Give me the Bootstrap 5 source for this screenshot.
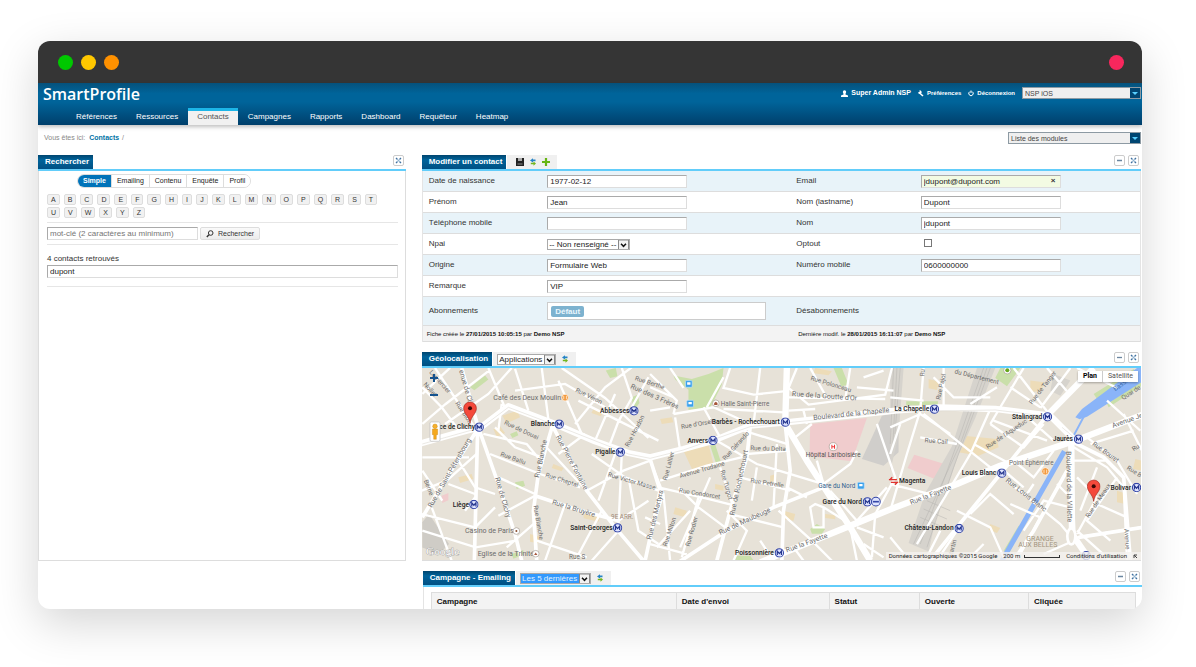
<!DOCTYPE html>
<html lang="fr">
<head>
<meta charset="utf-8">
<meta name="viewport" content="width=device-width, initial-scale=1">
<title>SmartProfile - Contacts</title>
<link href="https://cdn.jsdelivr.net/npm/bootstrap@5.3.0/dist/css/bootstrap.min.css" rel="stylesheet">
<style>
body{font-family:"Liberation Sans",Arial,sans-serif;font-size:8px;line-height:12px;color:#333;background:#fff;overflow-x:hidden}
input,select,button{font:inherit;color:inherit}
a{text-decoration:none}
.stage{padding:41px 54px 57px 38px}
.window{border-radius:12px;overflow:hidden;background:#fff;box-shadow:0 14px 45px rgba(0,0,0,.17)}
.titlebar{height:42px;background:#353535;padding:0 18px 0 20px}
.dot{width:15px;height:15px;border-radius:50%}
.masthead{height:42px;background:linear-gradient(#05517b,#00649a 25%,#00649a 45%,#003f6b);box-shadow:0 2px 4px rgba(0,0,0,.25);position:relative}
.brand{font:600 16px/22px "Open Sans",sans-serif;color:#fff;padding-left:5px}
.user-links{font-size:6px;font-weight:700;gap:7px;padding:4px 1px 0 0}
.user-links a{color:#fff;gap:3px}
.user-links .who{font-size:7px}
.main-nav{padding-left:29px;height:17px;gap:1px}
.main-nav .nav-link{color:#fff;padding:0 9px;line-height:11px;border-top:3px solid transparent;height:17px;font-size:8px}
.main-nav .active{background:#f1f1f1;color:#555;border-top-color:#1cb5e8}
.module-pick{appearance:none;border:1px solid #8d9aa3;border-radius:0;background:#efefef url("data:image/svg+xml,%3Csvg xmlns='http://www.w3.org/2000/svg' width='10' height='12'%3E%3Cpath fill='%23004672' d='M0 0h10v12H0z'/%3E%3Cpath fill='%2358d0ff' d='M2 5h6L5 8z'/%3E%3C/svg%3E") right center no-repeat;font-size:7px;font-weight:400;line-height:9px;height:12px;padding:0 12px 0 2px;color:#444}
.crumbs{height:30px;font-size:7px;padding:7px 0 0 6px;color:#888}
.crumbs .module-pick{margin-right:1px}
.crumbs a{color:#0072a5;font-weight:700;font-size:7px;margin:0 1px 0 2px}
.panes{gap:16px;padding-right:1px}
.panel-head{border-bottom:2px solid #62cdfa;height:16px}
.panel-head h2{font-size:8px;line-height:14px;font-weight:700;color:#fff;margin:0 1px 0 0;padding:0 4px 0 7px;height:14px;background:linear-gradient(#00456f,#00639a 35%,#005083)}
.panel-gap{margin-top:10px}
.tools{background:#f0f0f0;height:14px;gap:5px;padding:0 7px 0 9px}
.tools-pick{padding-left:4px}
.tools button,.mini{border:0;background:none;padding:0;line-height:0}
.mini{width:11px;height:11px;border:1px solid #ccc;border-radius:2px;background:#fff;margin-left:3px}
.mini-last{margin-right:2px}
.panel-body{border:1px solid #ddd;border-top:0;padding:3px 7px 0 8px;min-height:390px}
.modes{margin:0 0 6px 30px;width:max-content;border:1px solid #ddd;border-radius:8px;overflow:hidden;height:14px}
.modes button{border:0;border-right:1px solid #ddd;background:#fff;font-size:7px;line-height:12px;padding:0 5px;color:#222}
.modes button:last-child{border-right:0}
.modes .on{background:#0073b9;color:#fff;font-weight:700}
.letters{gap:2px 4px;padding-right:14px}
.letters button{border:1px solid #ddd;border-radius:2px;background:#f1f1f1;font-size:7px;line-height:9px;padding:0 3px;min-width:12px;color:#333}
.letters .thin{min-width:10px}
.rule{border-top:1px solid #e6e6e6}
.field{border:1px solid #ddd;border-top-color:#aaa;border-left-color:#aaa;background:#fff;height:13px;line-height:11px;padding:0 2px;color:#222;display:block;border-radius:0}
.search-row{padding:4px 0;margin-top:4px}
.search-btn{border:1px solid #ddd;border-radius:2px;background:linear-gradient(#fafafa,#ececec);font-size:7px;line-height:11px;padding:0 5px;gap:4px;margin-left:2px}
.native{appearance:none;border:1px solid #aaa;border-radius:0;height:11px;line-height:9px;padding:0 12px 0 1px;color:#222;background:#fff url("data:image/svg+xml,%3Csvg xmlns='http://www.w3.org/2000/svg' width='11' height='10'%3E%3Cpath fill='%23f2f2f2' stroke='%23888' d='M.5.5h10v9H.5z'/%3E%3Cpath fill='none' stroke='%23111' stroke-width='1.5' d='M3 4l2.500 2.500L8 4'/%3E%3C/svg%3E") right center no-repeat}
.native.picked{color:#e4f4ff;background-color:#3299fe}
.form-line{display:grid;grid-template-columns:25fr 50fr 25fr 44fr;align-items:center;min-height:21px;border-bottom:1px solid #ddd}
.form-line:nth-child(odd){background:#e8f3f9}
.form-line>:first-child{padding-left:6px}
.form-line .field{width:140px}
.tick{appearance:none;width:8px;height:8px;border:1px solid #777;background:#fff;margin:0 0 2px 3px}
.tick:checked{background:#3299fe}
.contact-form{border-left:1px solid #e4e4e4;border-right:1px solid #e4e4e4}
.mail-x{left:130px}
.tagbox{border:1px solid #ccc;background:#fff;width:219px;height:18px;padding:0 3px}
.tagbox span{background:#7db2cf;color:#e9f6fd;font-weight:700;border-radius:2px;line-height:11px;padding:0 4px}
.form-foot{display:grid;grid-template-columns:75fr 69fr;background:#f3f3f3;border-bottom:1px solid #ddd;font-size:6px;height:16px;line-height:16px;padding-left:4px;color:#111}
.map{position:relative;height:193px;overflow:hidden;border-bottom:1px solid #ddd;background:#e7e2d8}
.map>svg{width:100%;height:192px;display:block}
.map text{font-family:Roboto,sans-serif;font-size:19px;fill:#6b6b6b}
.map .wide{font-size:21px}
.map .stop text{fill:#222;font-size:20px;font-weight:500;text-anchor:end}
.map-type{position:absolute;right:3px;top:3px;box-shadow:0 1px 2px rgba(0,0,0,.3)}
.map-type button{border:0;background:#fff;font:7px/11px Roboto,sans-serif;padding:0 5px;color:#555}
.map-type .on{font-weight:700;color:#000;border-right:1px solid #ccc}
.map-zoom{position:absolute;left:7px;top:5px;gap:8px}
.map-zoom button{border:0;background:none;padding:0;line-height:0}
.map-legal{position:absolute;right:0;bottom:0;background:rgba(245,243,240,.8);font:6px/8px Roboto,sans-serif;color:#222;gap:6px;padding:0 3px}
.map-legal a{color:#222}
.scalebar{width:36px;height:3px;border:1px solid #333;border-top:0}
.campaign-head{margin:10px -1px 0 1px}
.campaigns{margin-left:1px;border-left:1px solid #e4e4e4;padding:5px 5px 0 7px}
.campaigns table{table-layout:fixed;width:100%;border:1px solid #ddd;border-bottom:0;border-collapse:collapse}
.campaigns th{background:#f3f3f3;border-right:1px solid #ddd;padding:3px 5px 1px;color:#111;line-height:12px}
</style>
</head>
<body>
<svg width="0" height="0" class="position-absolute" aria-hidden="true">
  <symbol id="i-close" viewBox="0 0 9 9"><path d="M2 2l1.500 1.500M7 2L5.500 3.500M2 7l1.500-1.500M7 7L5.500 5.500" stroke="#3f71a0" stroke-width="1.300"/><circle cx="4.500" cy="4.500" r="1" fill="#8fb3d0"/></symbol>
  <symbol id="i-min" viewBox="0 0 9 9"><path d="M2 4.500h5" stroke="#6b86a0" stroke-width="1.300"/></symbol>
  <symbol id="i-sync" viewBox="0 0 8 8"><path d="M1 2.500L4 .3v1.200h2.500v1.700H4v1.300z" fill="#2584c6"/><path d="M7 5.600L4.500 3.500v1.200H1.800v1.600h2.700v1.400z" fill="#73b51e"/></symbol>
  <symbol id="i-metro" viewBox="0 0 28 28"><circle cx="14" cy="14" r="12" fill="#dfe4ff" stroke="#3446a8" stroke-width="3"/><path d="M8 20V9l6 7 6-7v11" fill="none" stroke="#26378f" stroke-width="3.500"/></symbol>
  <symbol id="i-pin" viewBox="0 0 42 68"><path d="M21 66C19 45 2 38 2 21a19 19 0 0 1 38 0c0 17-17 24-19 45z" fill="#f4493b" stroke="#a5281e" stroke-width="2"/><circle cx="21" cy="21" r="6" fill="#3b0805"/></symbol>
</svg>

<div class="stage">
<div class="window">
  <div class="titlebar d-flex align-items-center">
    <span class="dot" style="background:#00c800"></span>
    <span class="dot ms-2" style="background:#ffc800"></span>
    <span class="dot ms-2" style="background:#ff9100"></span>
    <span class="dot ms-auto" style="background:#f8275d"></span>
  </div>

  <header class="masthead d-flex flex-column justify-content-between">
    <div class="d-flex justify-content-between">
      <div class="brand">SmartProfile</div>
      <div class="user-links d-flex align-items-start">
        <a href="#" class="who d-flex align-items-center"><svg width="7" height="7" viewBox="0 0 7 7"><circle cx="3.500" cy="2" r="1.700" fill="#fff"/><path d="M2.500 3h2v1.500L7 5.500V7H0V5.500l2.500-1z" fill="#fff"/></svg>Super Admin NSP</a>
        <a href="#" class="d-flex align-items-center"><svg width="6" height="7" viewBox="0 0 6 7"><path d="M1 2.500L5 6" stroke="#fff" stroke-width="1.600"/><path d="M0 2.500L1.600 2 1.500.3A2 2 0 0 1 3.500 3 2 2 0 0 1 0 2.500z" fill="#fff"/></svg>Préférences</a>
        <a href="#" class="d-flex align-items-center"><svg width="6" height="7" viewBox="0 0 6 7"><path d="M2 1.500a2.200 2.200 0 1 0 2 0M3 .5V3" fill="none" stroke="#fff"/></svg>Déconnexion</a>
        <select class="module-pick" aria-label="Application" style="width:119px"><option>NSP iOS</option></select>
      </div>
    </div>
    <nav class="nav main-nav flex-nowrap">
      <a class="nav-link" href="#">Références</a>
      <a class="nav-link" href="#">Ressources</a>
      <a class="nav-link active" href="#" aria-current="page">Contacts</a>
      <a class="nav-link" href="#">Campagnes</a>
      <a class="nav-link" href="#">Rapports</a>
      <a class="nav-link" href="#">Dashboard</a>
      <a class="nav-link" href="#">Requêteur</a>
      <a class="nav-link" href="#">Heatmap</a>
    </nav>
  </header>

  <div class="crumbs d-flex justify-content-between align-items-start">
    <div>Vous êtes ici: <a href="#">Contacts</a> /</div>
    <select class="module-pick" aria-label="Modules" style="width:133px"><option>Liste des modules</option></select>
  </div>

  <main class="panes d-flex align-items-start">
    <section class="col-4">
      <div class="panel-head d-flex justify-content-between">
        <h2>Rechercher</h2>
        <button class="mini mini-last" aria-label="Fermer"><svg width="9" height="9"><use href="#i-close"/></svg></button>
      </div>
      <div class="panel-body">
        <div class="modes d-flex">
          <button class="on">Simple</button><button>Emailing</button><button>Contenu</button><button>Enquête</button><button>Profil</button>
        </div>
        <div class="letters d-flex flex-wrap">
          <button>A</button><button>B</button><button>C</button><button>D</button><button>E</button><button>F</button><button>G</button><button>H</button><button class="thin">I</button><button>J</button><button>K</button><button>L</button><button>M</button><button>N</button><button>O</button><button>P</button><button>Q</button><button>R</button><button>S</button><button>T</button><button>U</button><button>V</button><button>W</button><button>X</button><button>Y</button><button>Z</button>
        </div>
        <form class="rule search-row d-flex">
          <input class="field" style="width:151px" placeholder="mot-clé (2 caractères au minimum)" aria-label="Mot-clé">
          <button type="button" class="search-btn d-flex align-items-center"><svg width="8" height="8" viewBox="0 0 8 8"><circle cx="4.700" cy="3" r="2.300" fill="none" stroke="#333"/><path d="M3 4.700L.8 7" stroke="#333" stroke-width="1.400"/></svg>Rechercher</button>
        </form>
        <div class="rule pt-2">
          <label for="found" class="d-block">4 contacts retrouvés</label>
          <input id="found" class="field w-100" value="dupont">
        </div>
        <div class="rule mt-2"></div>
      </div>
    </section>

    <div class="flex-grow-1">
      <section>
        <div class="panel-head d-flex">
          <h2>Modifier un contact</h2>
          <div class="tools d-flex align-items-center">
            <button aria-label="Enregistrer"><svg width="8" height="8" viewBox="0 0 8 8"><path d="M0 0h8v8H0z" fill="#222"/><path d="M2 0h4v3H2z" fill="#aaa"/><path d="M1.500 5h5v2h-5z" fill="#555"/></svg></button>
            <button aria-label="Actualiser"><svg width="8" height="8"><use href="#i-sync"/></svg></button>
            <button aria-label="Ajouter"><svg width="8" height="8" viewBox="0 0 8 8"><path d="M4 0v8M0 4h8" stroke="#66b512" stroke-width="2.200"/></svg></button>
          </div>
          <button class="mini ms-auto" aria-label="Réduire"><svg width="9" height="9"><use href="#i-min"/></svg></button>
          <button class="mini mini-last" aria-label="Fermer"><svg width="9" height="9"><use href="#i-close"/></svg></button>
        </div>
        <form class="contact-form">
          <div class="form-line"><label for="birth">Date de naissance</label><input id="birth" class="field" value="1977-02-12"><label for="mail">Email</label><div class="position-relative"><input id="mail" class="field" style="background:#f3fbe3" value="jdupont@dupont.com"><button type="button" class="mail-x position-absolute top-0 border-0 bg-transparent p-0 fw-bold" aria-label="Effacer">×</button></div></div>
          <div class="form-line"><label for="first">Prénom</label><input id="first" class="field" value="Jean"><label for="last">Nom (lastname)</label><input id="last" class="field" value="Dupont"></div>
          <div class="form-line"><label for="tel">Téléphone mobile</label><input id="tel" class="field"><label for="nom">Nom</label><input id="nom" class="field" value="jdupont"></div>
          <div class="form-line"><label for="npai">Npai</label><div class="d-flex"><select id="npai" class="native"><option>-- Non renseigné --</option></select></div><label for="optout">Optout</label><div class="d-flex"><input id="optout" class="tick" type="checkbox"></div></div>
          <div class="form-line"><label for="orig">Origine</label><input id="orig" class="field" value="Formulaire Web"><label for="num">Numéro mobile</label><input id="num" class="field" value="0600000000"></div>
          <div class="form-line"><label for="rem">Remarque</label><input id="rem" class="field" value="VIP"></div>
          <div class="form-line" style="min-height:29px"><div>Abonnements</div><div class="tagbox d-flex align-items-center"><span>Défaut</span></div><div>Désabonnements</div></div>
          <div class="form-foot"><div>Fiche créée le <b>27/01/2015 10:05:15</b> par <b>Demo NSP</b></div><div>Dernière modif. le <b>28/01/2015 16:11:07</b> par <b>Demo NSP</b></div></div>
        </form>
      </section>

      <section>
        <div class="panel-head panel-gap d-flex">
          <h2>Géolocalisation</h2>
          <div class="tools tools-pick d-flex align-items-center">
            <select class="native" aria-label="Couche"><option>Applications</option></select>
            <button aria-label="Actualiser"><svg width="8" height="8"><use href="#i-sync"/></svg></button>
          </div>
          <button class="mini ms-auto" aria-label="Réduire"><svg width="9" height="9"><use href="#i-min"/></svg></button>
          <button class="mini mini-last" aria-label="Fermer"><svg width="9" height="9"><use href="#i-close"/></svg></button>
        </div>
        <div class="map">
          <svg viewBox="0 0 2157 576" preserveAspectRatio="xMidYMid slice" role="img" aria-label="Carte">
            <!-- parks, blocks, hospitals, rail yards -->
            <g transform="translate(-21 -72)">
              <path fill="#cadfaa" d="M165 130l45-35 10 12-42 32zM285 270l20-8 5 12-18 8zM572 80l30-8 5 25-22 5zM650 160l18-8 5 25-18 25zM300 415l25-5 5 15-25 10zM290 630l35-12v14l-30 12z"/>
              <path fill="#eddcb8" d="M262 215l45-15 8 20-40 18zM235 255l20-8 15 20-25 12zM535 195l30 10-8 12-28-10zM130 400l40-10 5 15-40 12zM415 360l30 12-5 10-30-10zM505 510l50 8-4 15-45-10zM345 570l30 8-6 20-24-5z"/>
              <path fill="#f0cccd" d="M80 455l20-8v22l-18 8z"/>
              <path fill="#cfccc6" d="M22 535l20-25 60 90-30 30-50-20z"/>
            </g>
            <g transform="translate(684 -72)">
              <path fill="#cadfaa" d="M70 95l55 10 50-15 45-18-5 50-35 70-65 5v-60l-40-30zM180 305l15-4 18 55-14 6zM550 72h25l20 50-22 5zM480 555l20-15 25 15-10 14h-30zM260 635h40l10 14h-60z"/>
              <path fill="#eddcb8" d="M100 320l75-20 15 60-60 25zM30 225l35-5 5 15-35 5zM360 395l18-5v20l-18 5zM400 500l35 10-5 20-35-5zM75 490l35 10-5 20-35-10zM195 420l25 5v15l-25-5zM525 510l30 4v12l-30-4zM495 72l50 10-10 12-45-6z"/>
              <path fill="#f0cccd" d="M480 240l170-18-45 130-127-15z"/>
              <path fill="#d0cecb" d="M695 215l50-10v120l-45 40-65-20z"/>
            </g>
            <g transform="translate(1404 -72)">
              <path fill="#cadfaa" d="M330 72h60l-40 55-35-25zM48 172h95v12H48zM610 150l120-75 8 10-118 80zM650 180l105-70v15l-100 65zM340 620l45-75 10 5-40 80z"/>
              <path fill="#eddcb8" d="M220 275l100 10 5 25-60 25-60-10zM115 105l30 8-5 25-25-5zM420 110l40 5-5 25-35 5zM735 345l18 5v30l-25-5zM680 440l30 10-5 30-25-5zM300 540l30 12-10 15-25-10z"/>
              <path fill="#f0cccd" d="M72 332l98 30-20 50-98-40z"/>
              <path fill="#d6d3cd" d="M260 72h55l-60 150-50 110-70 200-20 90-60-25 50-150 80-140zM0 72h40l-15 200-25 110zM490 90l50 20-30 45-30-15z"/>
              <path stroke="#b7b4b0" stroke-width="1.500" fill="none" d="M280 72L200 300 90 600M290 72L210 300 70 600M300 72L190 370 110 610M10 72L0 300M20 72L8 300M30 72L14 270M110 470l70 30M100 495l70 30M90 520l70 30"/>
              <path fill="#8ab4f8" d="M555 220l20-25 165-123h15v42L590 218l-22 8z"/>
              <path stroke="#8ab4f8" stroke-width="15" fill="none" d="M522 322L395 545 335 650"/><path stroke="#8ab4f8" stroke-width="6" d="M582 215l-32 60"/>
            </g>
            <!-- side streets -->
            <g fill="none" stroke="#fff" stroke-width="7">
              <path transform="translate(-21 -72)" d="M22 130L80 190 140 270M60 72l120 180M22 150L80 95 105 72M90 240L220 150 290 72M22 240l70-60 130-100M220 72l50 120M300 75l40 125M380 72l20 155M300 140l150-20 120 70M440 72l130 90 130 120M480 240l90-110 80-60M540 290l60-140M620 72l30 90-40 70-30 80M700 100l-50 90M430 110l70 160M490 170l240 120M240 250l60 60 80 30M205 270l130 30 50 60M225 330l150 60 120 40M250 400l110 50M185 330l-90 80-75 30M130 350l50 80 60 20M100 420l80 30M240 490l-60 60-160-40M50 490l60 160M22 560l160 50 120-20M360 455l-110 60M355 540l-80 70M365 590l150 50M450 480l-60 170M515 440l110-60 80-30M530 330l100 70 100 40M600 330l-50 140M620 330l-10 220M640 400l30 160 60 40M560 500l-80 150M610 560l-80 90M430 330l80-60M385 300l130 140M700 470l-90 60M690 520l45 20M260 180l-10 80M22 340l140 0M22 380l60 90M150 500l30-40"/>
              <path transform="translate(684 -72)" d="M0 90l80 80-10 40M60 72l40 60M70 210L190 190 300 240M75 220l15 100M160 190l50 90M220 100l-50 90M330 72l-20 170M240 72l-20 60 90 20 90-10M220 195l180 10M0 130l70 30M440 72l-25 60 60 50 230-30 20-80M415 160l290 5M415 200l80-5M480 72l50 90M600 72l-15 95M640 100l60-20M620 130l110 10M280 260l130 40M200 290l120 70 200 60M290 330l125-10M270 400l150 40M30 410l140-45 125-30M25 430l130 30 100 25M0 350l40 100-30 90M85 430l60 60 80 60M210 370l40 120M180 400l-90 210M120 500l-100 110M40 450l20 200M145 460l-50 180M380 300l-10 190M320 370l-15 100M240 510l160 40M385 500l100 90 60 60M480 490l10 60 30 0v-60l-25-10zM500 350l20 70 80-60 20-40M435 280l50-40M600 540l-80-50M540 440l80 90 90-100M600 550l20 100M620 550l80 30M680 240l55 160-60 110-10 130M700 640l-60-40M0 600l110 30M230 500l60 60-40 90M410 430l60 30M460 200l10 40M330 590l40 60M430 610l30 40M0 200l60-10"/>
              <path transform="translate(1404 -72)" d="M100 72L90 200 50 330 0 500M100 210l200 160M0 250l90-40 90 60M160 72v120M130 100l60 60 110 0M90 280l110 20M300 195L240 330 80 600M400 72L300 240M370 72l100 130M310 230l160 60M360 130l90 60M300 240l100 70 60-70M250 300l110 60M470 72l60 70M540 72l-90 120M560 72l120 60M590 280l90 70 60 100M600 300l130-40M550 310l100 60 50 60 10 220M620 370l-50 130M560 400l60 60-60 110M680 400l-90 130 70 60M650 170l100 90M700 210l55 110M545 350h100M560 580l195-30M560 560l100 90M620 480l90 40M560 600l-50-60-160-130M200 500l100 50 40 90M200 560l-60 90M240 510l60-60 70 60M360 480l90 40-60 110M330 370l70 60M490 320l-60 80-60-50M400 560l60-90 80 20M460 630l90-40M110 640l40-80M0 580l50 60M0 420l120 30M280 600l-50 50M400 210l90 80M0 160l100 10M30 240l-30 90M320 130l-80 50M500 420l30 30M430 420l-20 30"/>
            </g>
            <!-- avenues -->
            <g fill="none" stroke="#fff" stroke-width="11">
              <path transform="translate(-21 -72)" d="M140 72L188 245 250 420 300 570 320 650M185 260L95 400 22 520M188 250L178 650M412 245L370 390 355 500 365 650M412 245L515 440 600 550 685 650M360 455L480 495 610 530M705 345L735 440 690 650M22 300L0 310"/>
              <path transform="translate(684 -72)" d="M300 250L290 340 240 500 200 650M405 240L420 380 400 500 395 650M85 655L230 560 370 490 520 430"/>
              <path transform="translate(1404 -72)" d="M330 390L200 550 120 650M470 215L330 390M540 290L550 560M530 380L430 560 370 650M540 290L640 340 700 400 720 650M565 580L755 550"/>
            </g>
            <g fill="none" stroke="#fff" stroke-width="19" stroke-linejoin="round">
              <path transform="translate(-21 -72)" d="M10 300L110 272 200 248 280 187 420 240 540 292 640 327 705 340 805 315 895 290 1005 245 1105 236 1440 200 1570 190 1740 195 1905 215M1905 215L1980 290 2200 205"/>
              <path transform="translate(684 -72)" d="M410 72L405 240 470 350 600 550 660 650M330 655L600 545 735 490 920 420 1050 365 1260 295"/>
              <path transform="translate(1404 -72)" d="M470 215L610 72M543 295L545 570 600 650"/>
            </g>
            <g fill="none" stroke="#d6d2ca" stroke-width="1.500"><path transform="translate(-21 -72)" d="M22 300L200 250 280 190 420 243 640 330 705 343 805 318 1005 248 1440 203 1740 198 1905 218M1940 250L2000 300"/></g>
            <ellipse cx="1947" cy="505" rx="12" ry="24" fill="#e9e5dc" stroke="#fff" stroke-width="8"/>

            <!-- street names -->
            <g transform="translate(-21 -72)">
              <text transform="translate(132 80) rotate(74)" class="wide">enue de Clichy</text>
              <text transform="translate(42 86) rotate(48)">Lemercier</text><text transform="translate(24 122) rotate(48)">Nollet</text>
              <text transform="translate(120 178) rotate(56)">Rue Biot</text>
              <text x="235" y="169" class="wide">Café des Deux Moulins</text>
              <text transform="translate(480 143) rotate(26)">Rue Véron</text>
              <text transform="translate(658 108) rotate(18)">Rue Berthe</text>
              <text transform="translate(645 132) rotate(24)" class="wide">Rue des 3 Frères</text>
              <text transform="translate(266 240) rotate(25)">Rue de Douai</text>
              <text transform="translate(255 335) rotate(20)">Rue Ballu</text>
              <text transform="translate(372 402) rotate(-78)" class="wide">Rue Blanche</text>
              <text transform="translate(422 278) rotate(62)" class="wide">Rue Pierre Fontaine</text>
              <text transform="translate(640 310) rotate(-62)">Rue Houdon</text>
              <text transform="translate(390 398) rotate(18)">Rue Chaptal</text>
              <text transform="translate(577 397) rotate(16)">Rue Victor Masse</text>
              <text transform="translate(240 402) rotate(74)" class="wide">Rue de Clichy</text>
              <text transform="translate(50 492) rotate(-60)" class="wide">Rue de Saint-Pétersbourg</text>
              <text transform="translate(26 410) rotate(68)">Berne</text>
              <text transform="translate(355 485) rotate(80)">Rue Blanche</text>
              <text transform="translate(410 480) rotate(17)" class="wide">Rue la Bruyère</text>
              <text x="588" y="525" style="fill:#a08b78">9E ARR.</text>
              <text transform="translate(708 588) rotate(-76)" class="wide">Rue des Martyrs</text>
              <text x="150" y="567" class="wide">Casino de Paris</text><text x="188" y="636" class="wide">Eglise de la Trinité</text>
              <text x="462" y="645">Rue S</text>
              <text x="33" y="632" style="font:34px 'Liberation Serif',serif;fill:#fff;stroke:#8d8d8d;stroke-width:2;paint-order:stroke">Google</text>
            </g>
            <g transform="translate(684 -72)">
              <text x="212" y="185">Halle Saint-Pierre</text>
              <text transform="translate(480 108) rotate(17)">Rue Polonceau</text>
              <text transform="translate(425 156) rotate(4)" class="wide">Rue de la Goutte d'Or</text>
              <text transform="translate(490 228) rotate(-6)" class="wide">Boulevard de la Chapelle</text>
              <text transform="translate(94 255) rotate(-10)">Rue d'Orsel</text>
              <text transform="translate(300 318) rotate(2)">Rue du Delta</text>
              <text transform="translate(225 350) rotate(-48)">Rue Gérando</text>
              <text transform="translate(90 402) rotate(-16)">Avenue Trudaine</text>
              <text transform="translate(50 410) rotate(-75)">Rue Lallier</text>
              <text transform="translate(210 380) rotate(74)">Rue Turgot</text>
              <text transform="translate(252 515) rotate(-78)" class="wide">Rue de Rochechouart</text>
              <text transform="translate(300 415) rotate(9)">Rue Petrelle</text>
              <text transform="translate(86 445) rotate(9)">Rue Condorcet</text>
              <text transform="translate(210 573) rotate(-25)" class="wide">Rue de Maubeuge</text>
              <text transform="translate(50 608) rotate(-72)">Rue Milton</text>
              <text transform="translate(118 608) rotate(-74)">Rue Rodier</text>
              <text x="467" y="340" style="fill:#555">Hôpital Lariboisière</text>
              <text x="504" y="432" style="fill:#346390">Gare du Nord</text>
              <text transform="translate(410 625) rotate(-20)" class="wide">Rue la Fayette</text>
            </g>
            <g transform="translate(1404 -72)">
              <text transform="translate(102 98) rotate(-85)">Ru</text>
              <text transform="translate(150 168) rotate(-78)">Rue Pajol</text>
              <text transform="translate(192 88) rotate(14)">du Département</text>
              <text transform="translate(425 182) rotate(-52)">Rue de Tanger</text>
              <text transform="translate(103 295) rotate(4)">Rue Cail</text>
              <text transform="translate(292 315) rotate(-34)">Rue de l'Aqueduc</text>
              <text x="356" y="363">Point Éphémère</text>
              <text transform="translate(62 482) rotate(-21)" class="wide">Rue la Fayette</text>
              <text transform="translate(345 412) rotate(38)" class="wide">Rue Louis Blanc</text>
              <text transform="translate(528 322) rotate(89)" class="wide">Boulevard de la Villette</text>
              <text transform="translate(605 302) rotate(36)">Rue Bouret</text>
              <text transform="translate(595 523) rotate(-56)">Rue de Meaux</text>
              <text transform="translate(668 252) rotate(-20)" class="wide">Avenue Je</text>
              <text transform="translate(675 142) rotate(-36)" style="fill:#3d6fae">Bassin d</text>
              <text transform="translate(698 168) rotate(-32)">Quai de</text>
              <text transform="translate(730 322) rotate(-34)">Ru</text><text transform="translate(708 375) rotate(32)">Rue B</text>
              <text transform="translate(702 555) rotate(86)">Avenue</text>
              <text transform="translate(185 642) rotate(-75)">Martin</text>
              <text x="408" y="590" class="wide" style="fill:#a39580">GRANGE</text><text x="384" y="610" class="wide" style="fill:#a39580">AUX BELLES</text>
            </g>

            <!-- metro stops -->
            <g class="stop" transform="translate(-21 -72)">
              <text x="180" y="256">ce de Clichy</text><use href="#i-metro" x="178" y="235" width="29" height="29"/>
              <text x="419" y="247">Blanche</text><use href="#i-metro" x="418" y="226" width="29" height="29"/>
              <text x="643" y="207">Abbesses</text><use href="#i-metro" x="642" y="186" width="29" height="29"/>
              <text x="601" y="331">Pigalle</text><use href="#i-metro" x="601" y="310" width="29" height="29"/>
              <text x="162" y="488">Liège</text><use href="#i-metro" x="162" y="467" width="29" height="29"/>
              <text x="593" y="557">Saint-Georges</text><use href="#i-metro" x="593" y="537" width="29" height="29"/>
            </g>
            <g class="stop" transform="translate(684 -72)">
              <text x="389" y="240">Barbès - Rochechouart</text><use href="#i-metro" x="391" y="220" width="29" height="29"/>
              <text x="174" y="296">Anvers</text><use href="#i-metro" x="174" y="275" width="29" height="29"/>
              <text x="635" y="480">Gare du Nord</text><use href="#i-metro" x="637" y="459" width="29" height="29"/>
              <circle cx="677" cy="473" r="13" fill="#dfe4ff" stroke="#3446a8" stroke-width="3"/><path d="M668 473h18" stroke="#3446a8" stroke-width="5"/>
              <text x="371" y="632">Poissonnière</text><use href="#i-metro" x="373" y="612" width="29" height="29"/>
            </g>
            <g class="stop" transform="translate(1404 -72)">
              <text x="117" y="201">La Chapelle</text><use href="#i-metro" x="118" y="181" width="29" height="29"/>
              <text x="456" y="224">Stalingrad</text><use href="#i-metro" x="457" y="204" width="29" height="29"/>
              <text x="548" y="291">Jaurès</text><use href="#i-metro" x="550" y="271" width="29" height="29"/>
              <text x="318" y="394">Louis Blanc</text><use href="#i-metro" x="320" y="373" width="29" height="29"/>
              <text x="105" y="418">Magenta</text>
              <text x="190" y="559">Château-Landon</text><use href="#i-metro" x="192" y="539" width="29" height="29"/>
              <text x="722" y="437">Bolivar</text><use href="#i-metro" x="724" y="416" width="29" height="29"/>
              <use href="#i-metro" x="573" y="620" width="29" height="29"/>
              <path d="M-4 407h24M2 415h22M6 400l-8 8M14 422l8-8" stroke="#e0322f" stroke-width="4"/>
            </g>
            <!-- points of interest -->
            <g stroke-width="2">
              <g fill="#f39a3d" stroke="#fff"><circle cx="429" cy="89" r="10"/><circle cx="1869" cy="310" r="11"/></g>
              <path d="M425 84v10M433 84v10M1865 305v11M1873 305v11" stroke="#fff"/>
              <g fill="#fff" stroke="#a59a90"><circle cx="283" cy="489" r="10"/><circle cx="341" cy="557" r="10"/><circle cx="881" cy="106" r="10"/><circle cx="1233" cy="236" r="12"/><circle cx="1755" cy="7" r="11"/></g>
              <circle cx="283" cy="489" r="3" fill="#8a4a2a"/><path d="M336 561l5-8 5 8zM876 111v-6l5-4 5 4v6z" fill="#a7563b"/>
              <path d="M1229 230v12M1237 230v12M1229 236h8" stroke="#e33" stroke-width="3"/><circle cx="1755" cy="7" r="6" fill="#68a71f"/>
              <g fill="#3aa0ea" stroke="#bfe2ff"><rect x="790" y="38" width="20" height="20" rx="3"/><rect x="794" y="97" width="20" height="20" rx="3"/><rect x="1306" y="343" width="20" height="20" rx="3"/></g>
              <path fill="#fff" d="M795 43h10v7h-10zM799 102h10v7h-10zM1311 348h10v7h-10z"/>
            </g>
            <use href="#i-pin" x="123" y="100" width="42" height="68"/>
            <use href="#i-pin" x="1993" y="334" width="42" height="68"/>
            <g><rect x="24" y="162" width="30" height="58" rx="4" fill="#fff" stroke="#bbb" stroke-width="2"/><circle cx="39" cy="175" r="7" fill="#f5b12e" stroke="#c07a10"/><path d="M31 183h16v17h-4v14h-8v-14h-4z" fill="#f5a91d" stroke="#c07a10"/></g>
          </svg>
          <div class="map-zoom d-flex flex-column">
            <button aria-label="Zoom avant"><svg width="10" height="10" viewBox="0 0 10 10"><path d="M5 1v8M1 5h8" stroke="#15538f" stroke-width="2"/></svg></button>
            <button aria-label="Zoom arrière"><svg width="10" height="8" viewBox="0 0 10 8"><path d="M1 4h8" stroke="#15538f" stroke-width="2"/></svg></button>
          </div>
          <div class="map-type d-flex"><button class="on">Plan</button><button>Satellite</button></div>
          <div class="map-legal d-flex align-items-center"><span>Données cartographiques ©2015 Google</span><span class="d-flex align-items-center gap-1">200 m <i class="scalebar"></i></span><a href="#">Conditions d'utilisation</a><svg width="5" height="5" viewBox="0 0 5 5"><path d="M1 4V1h3M1 1l3 3" fill="none" stroke="#444"/></svg></div>
        </div>
      </section>

      <section>
        <div class="panel-head campaign-head d-flex">
          <h2>Campagne - Emailing</h2>
          <div class="tools tools-pick d-flex align-items-center">
            <select class="native picked" aria-label="Période"><option>Les 5 dernières</option></select>
            <button aria-label="Actualiser"><svg width="8" height="8"><use href="#i-sync"/></svg></button>
          </div>
          <button class="mini ms-auto" aria-label="Réduire"><svg width="9" height="9"><use href="#i-min"/></svg></button>
          <button class="mini mini-last" aria-label="Fermer"><svg width="9" height="9"><use href="#i-close"/></svg></button>
        </div>
        <div class="campaigns">
          <table>
            <colgroup><col style="width:34.8%"><col style="width:21.7%"><col style="width:12.8%"><col style="width:15.5%"><col style="width:15.2%"></colgroup>
            <thead><tr><th>Campagne</th><th>Date d'envoi</th><th>Statut</th><th>Ouverte</th><th>Cliquée</th></tr></thead>
          </table>
        </div>
      </section>
    </div>
  </main>
</div>
</div>
<script src="https://cdn.jsdelivr.net/npm/bootstrap@5.3.0/dist/js/bootstrap.bundle.min.js"></script>
</body>
</html>
